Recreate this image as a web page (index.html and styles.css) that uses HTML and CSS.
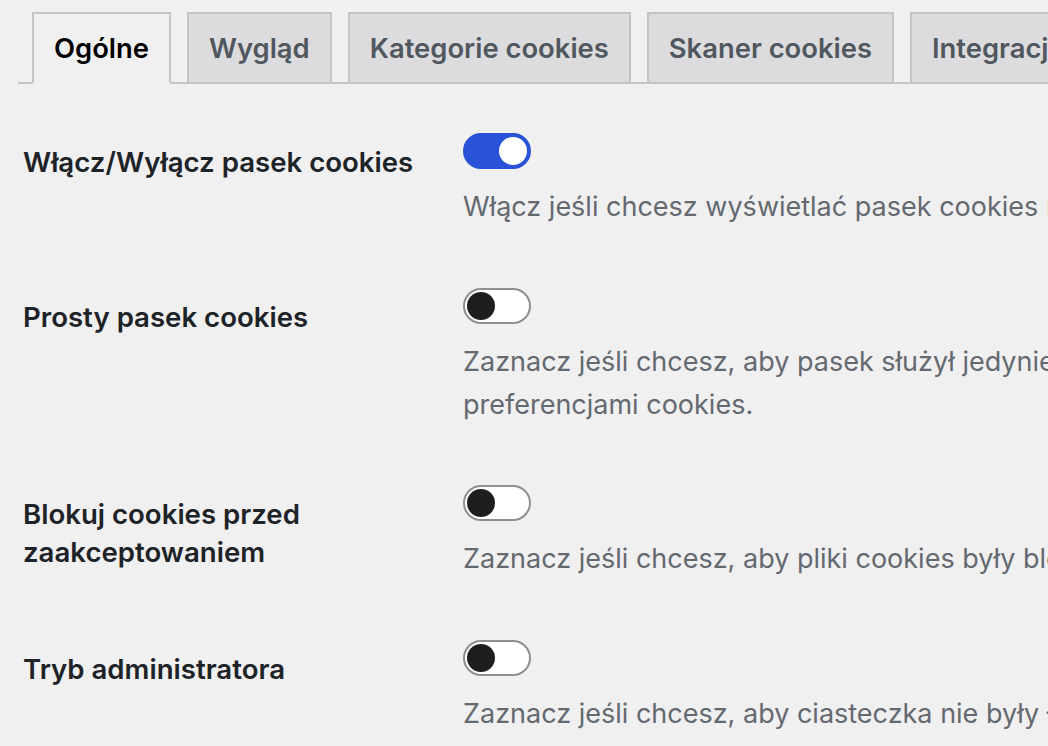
FILE: index.html
```html
<!DOCTYPE html>
<html lang="pl">
<head>
<meta charset="utf-8">
<title>Ustawienia cookies</title>
<link rel="stylesheet" href="styles.css">
</head>
<body>
<div class="wrap">
  <nav class="tabs">
    <a class="tab tab-active">Ogólne</a>
    <a class="tab">Wygląd</a>
    <a class="tab">Kategorie cookies</a>
    <a class="tab">Skaner cookies</a>
    <a class="tab">Integracje</a>
  </nav>
  <div class="form">
    <div class="row">
      <div class="label">Włącz/Wyłącz pasek cookies</div>
      <div class="field">
        <span class="toggle toggle-on"><span class="knob"></span></span>
        <p class="desc">Włącz jeśli chcesz wyświetlać pasek cookies na stronie.</p>
      </div>
    </div>
    <div class="row">
      <div class="label">Prosty pasek cookies</div>
      <div class="field">
        <span class="toggle"><span class="knob"></span></span>
        <p class="desc">Zaznacz jeśli chcesz, aby pasek służył jedynie do informowania, bez zarządzania<br>preferencjami cookies.</p>
      </div>
    </div>
    <div class="row">
      <div class="label">Blokuj cookies przed zaakceptowaniem</div>
      <div class="field">
        <span class="toggle"><span class="knob"></span></span>
        <p class="desc">Zaznacz jeśli chcesz, aby pliki cookies były blokowane do momentu akceptacji.</p>
      </div>
    </div>
    <div class="row">
      <div class="label">Tryb administratora</div>
      <div class="field">
        <span class="toggle"><span class="knob"></span></span>
        <p class="desc">Zaznacz jeśli chcesz, aby ciasteczka nie były ładowane dla administratorów.</p>
      </div>
    </div>
  </div>
</div>
</body>
</html>
```
FILE: styles.css
```css
html, body {
  margin: 0;
  padding: 0;
  background: #f0f0f1;
  overflow: hidden;
  width: 1048px;
  height: 746px;
}
body {
  font-family: Inter, "Noto Sans", "Liberation Sans", sans-serif;
  color: #1d2327;
}
.wrap {
  padding-left: 18px;
}
.tabs {
  display: flex;
  flex-wrap: nowrap;
  gap: 16px;
  padding: 12px 0 0 14px;
  border-bottom: 2px solid #c3c4c7;
  white-space: nowrap;
}
.tab {
  flex: none;
  display: block;
  margin-bottom: -2px;
  padding: 10px 20px;
  font-size: 27.4px;
  line-height: 48px;
  font-weight: 600;
  color: #50575e;
  background: #dcdcde;
  border: 2px solid #c3c4c7;
  text-decoration: none;
}
.tab-active {
  color: #000;
  background: #f0f0f1;
  border-bottom-color: #f0f0f1;
}
.form {
  margin-top: 19px;
  padding-left: 5px;
}
.row {
  display: grid;
  grid-template-columns: 440px 1fr;
  padding: 30px 0 29.5px;
}
.label {
  padding-top: 10px;
  padding-right: 20px;
  font-size: 27.6px;
  font-weight: 600;
  line-height: 38px;
}
.field {
  white-space: nowrap;
}
.toggle {
  display: block;
  box-sizing: border-box;
  width: 68px;
  height: 36px;
  border-radius: 18px;
  border: 2px solid #8c8f94;
  background: #fff;
  position: relative;
}
.toggle .knob {
  position: absolute;
  top: 2px;
  left: 2px;
  width: 28px;
  height: 28px;
  border-radius: 50%;
  background: #1e1e1e;
}
.toggle-on {
  background: #2a52d9;
  border-color: #2a52d9;
}
.toggle-on .knob {
  left: auto;
  right: 2px;
  background: #fff;
}
.desc {
  margin: 16px 0 0;
  font-size: 27px;
  line-height: 43px;
  color: #646970;
}
```
